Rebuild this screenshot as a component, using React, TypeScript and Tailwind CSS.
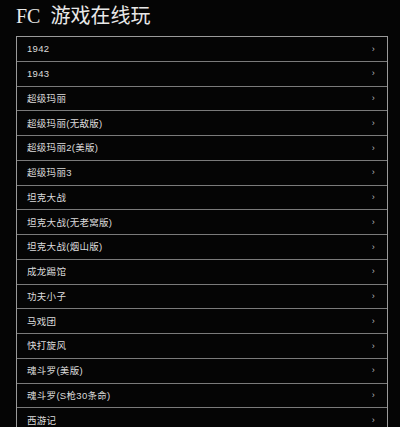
import React from 'react';

const GAMES = [
  '1942',
  '1943',
  '超级玛丽',
  '超级玛丽(无敌版)',
  '超级玛丽2(美版)',
  '超级玛丽3',
  '坦克大战',
  '坦克大战(无老窝版)',
  '坦克大战(烟山版)',
  '成龙踢馆',
  '功夫小子',
  '马戏团',
  '快打旋风',
  '魂斗罗(美版)',
  '魂斗罗(S枪30条命)',
  '西游记',
];

export default function App() {
  return (
    <div className="w-[400px] h-[427px] overflow-hidden bg-[#050505] font-['Liberation_Serif','Noto_Sans_CJK_SC',serif]">
      <h1 className="pl-4 pt-[4px] h-[36px] text-[20px] leading-[24px] text-[#e8e8e8] font-normal">
        FC&nbsp; 游戏在线玩
      </h1>
      <div className="ml-4 w-[372px] border border-[#9a9a9a] border-b-0">
        {GAMES.map((g) => (
          <div
            key={g}
            className="h-[24.75px] flex items-center justify-between pl-[10px] pr-[12px] pt-[1px] border-b border-[#7a7a7a] text-[9.5px] tracking-[0.3px] text-[#dcdcdc] font-['Liberation_Sans','Noto_Sans_CJK_SC',sans-serif]"
          >
            <span>{g}</span>
            <span className="text-[9px] text-[#bbb]">›</span>
          </div>
        ))}
      </div>
    </div>
  );
}
